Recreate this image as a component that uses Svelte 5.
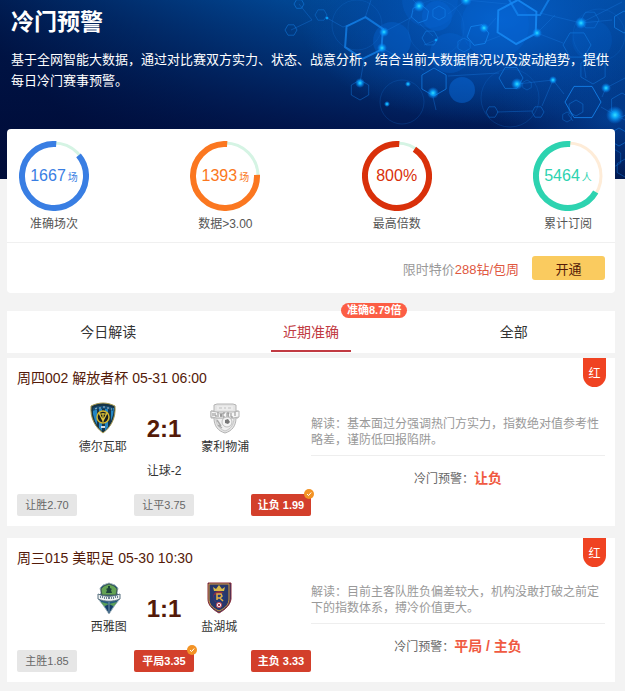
<script>
  let activeTab = 'recent';

  const stats = [
    { value: '1667', unit: '场', label: '准确场次', color: '#397ee3', track: '#d5f4e4', gap: 50 },
    { value: '1393', unit: '场', label: '数据>3.00', color: '#fb7720', track: '#d5f4e4', gap: 88 },
    { value: '800%', unit: '', label: '最高倍数', color: '#d9300a', track: '#d5f4e4', gap: 33 },
    { value: '5464', unit: '人', label: '累计订阅', color: '#2dd3b0', track: '#feecd8', gap: 120 }
  ];

  const tabs = [
    { id: 'today', label: '今日解读' },
    { id: 'recent', label: '近期准确', badge: '准确8.79倍' },
    { id: 'all', label: '全部' }
  ];

  const matches = [
    {
      title: '周四002 解放者杯 05-31 06:00',
      home: { name: '德尔瓦耶', crest: 'valle' },
      away: { name: '蒙利物浦', crest: 'liverpool' },
      score: '2:1',
      handicap: '让球-2',
      odds: [
        { text: '让胜2.70' },
        { text: '让平3.75' },
        { text: '让负 1.99', picked: true, hit: true }
      ],
      analysis: '基本面过分强调热门方实力，指数绝对值参考性略差，谨防低回报陷阱。',
      warning: '让负'
    },
    {
      title: '周三015 美职足 05-30 10:30',
      home: { name: '西雅图', crest: 'seattle' },
      away: { name: '盐湖城', crest: 'saltlake' },
      score: '1:1',
      odds: [
        { text: '主胜1.85' },
        { text: '平局3.35', picked: true, hit: true },
        { text: '主负 3.33', picked: true }
      ],
      analysis: '目前主客队胜负偏差较大，机构没敢打破之前定下的指数体系，搏冷价值更大。',
      warning: '平局 / 主负'
    }
  ];

  // [cx, cy, radius, rotation, opacity]
  const hexagons = [
    [364, 38, 21, 4, 0.7], [517, 22, 22, 2, 0.9], [420, 14, 9, 10, 0.6], [439, 13, 7, 0, 0.5],
    [430, 38, 8, 30, 0.45], [478, 35, 11, 20, 0.7], [464, 45, 7, 0, 0.4], [577, 45, 14, 30, 0.45],
    [434, 82, 14, 0, 0.65], [360, 90, 10, 0, 0.4], [511, 78, 12, 30, 0.55], [583, 102, 18, 30, 0.8],
    [576, 108, 8, 0, 0.4], [492, 112, 6, 30, 0.4], [538, 112, 6, 30, 0.4], [567, 117, 5, 0, 0.35],
    [624, 22, 11, 0, 0.6], [321, 15, 6, 30, 0.35], [299, 4, 5, 30, 0.5], [291, 30, 6, 30, 0.45],
    [593, 70, 14, 0, 0.4], [529, -4, 22, 30, 0.7], [527, 85, 5, 0, 0.3], [590, 20, 9, 30, 0.35],
    [619, 137, 9, 0, 0.5], [612, 158, 10, 0, 0.35], [625, 168, 9, 0, 0.4], [622, 105, 12, 0, 0.4]
  ];

  // [cx, cy, radius, opacity]
  const bubbles = [
    [392, 41, 19, 0.35], [437, 16, 15, 0.4], [450, 53, 20, 0.3], [462, 90, 13, 0.5],
    [495, 25, 34, 0.3], [517, 22, 20, 0.4], [592, 40, 20, 0.2], [430, 0, 28, 0.25]
  ];

  const circles = [
    [357, 25, 25], [402, 102, 22], [510, 98, 29], [599, 35, 26], [436, 28, 28]
  ];

  const links = [
    '291,30 312,20 299,4', '327,18 343,27 356,22', '365,18 371,0', '384,32 412,17',
    '382,48 396,56 424,70', '419,6 413,0', '436,40 424,45', '448,14 466,0 507,4',
    '487,28 496,18', '484,42 500,36', '537,33 563,43', '540,13 581,23 612,20',
    '581,23 622,2', '360,83 364,60', '433,97 436,110', '448,76 499,73', '517,84 553,80 564,94',
    '583,59 586,78', '553,80 542,106', '606,88 602,97', '601,107 615,115 625,120',
    '497,112 532,111', '568,114 573,121', '537,33 555,15', '420,24 433,36', '606,88 625,78'
  ];

  // [cx, cy, radius]
  const glows = [
    [384, 32, 5], [382, 48, 5], [419, 6, 6], [484, 28, 5], [537, 33, 5], [581, 23, 6],
    [360, 83, 5], [433, 93, 6], [517, 84, 6], [553, 80, 4], [606, 88, 5], [615, 115, 9],
    [466, 0, 6], [327, 18, 2], [436, 40, 2], [408, 84, 3], [387, 104, 3]
  ];

  function hexPoints([cx, cy, r, rotation]) {
    return [0, 1, 2, 3, 4, 5]
      .map((i) => {
        const a = ((i * 60 - 90 + rotation) * Math.PI) / 180;
        return `${(cx + r * Math.cos(a)).toFixed(1)},${(cy + r * Math.sin(a)).toFixed(1)}`;
      })
      .join(' ');
  }
</script>

<main>
  <header class="hero">
    <svg class="hero-art" viewBox="0 0 625 179" preserveAspectRatio="xMaxYMin slice" aria-hidden="true">
      <defs>
        <linearGradient id="sky" x1="0" y1="0" x2="0" y2="1">
          <stop offset="0" stop-color="#014c9c" />
          <stop offset="0.35" stop-color="#01377f" />
          <stop offset="0.7" stop-color="#011b57" />
          <stop offset="1" stop-color="#011040" />
        </linearGradient>
        <linearGradient id="shade" x1="0" y1="0.3" x2="1" y2="0">
          <stop offset="0" stop-color="#000c38" stop-opacity="0.85" />
          <stop offset="0.5" stop-color="#000c38" stop-opacity="0.1" />
          <stop offset="1" stop-color="#000c38" stop-opacity="0" />
        </linearGradient>
        <radialGradient id="light">
          <stop offset="0" stop-color="#0563d0" stop-opacity="0.9" />
          <stop offset="0.6" stop-color="#0350b4" stop-opacity="0.5" />
          <stop offset="1" stop-color="#0350ac" stop-opacity="0" />
        </radialGradient>
        <radialGradient id="glow">
          <stop offset="0" stop-color="#35e0ff" />
          <stop offset="0.35" stop-color="#08aaff" stop-opacity="0.9" />
          <stop offset="1" stop-color="#0780ff" stop-opacity="0" />
        </radialGradient>
      </defs>
      <rect width="625" height="179" fill="url(#sky)" />
      <rect width="625" height="179" fill="url(#shade)" />
      <ellipse cx="500" cy="20" rx="200" ry="105" fill="url(#light)" />
      <ellipse cx="610" cy="120" rx="120" ry="75" fill="url(#light)" opacity="0.5" />
      {#each bubbles as [cx, cy, r, opacity]}
        <circle {cx} {cy} {r} fill="#0767d8" {opacity} />
      {/each}
      {#each circles as [cx, cy, r]}
        <circle {cx} {cy} {r} fill="none" stroke="#1270d2" opacity="0.25" />
      {/each}
      {#each links as points}
        <polyline {points} fill="none" stroke="#1675dc" opacity="0.4" />
      {/each}
      {#each hexagons as hex}
        <polygon
          points={hexPoints(hex)}
          fill="none"
          stroke="#1687f2"
          stroke-width={hex[2] > 20 ? 2 : 1}
          opacity={hex[4]}
        />
      {/each}
      {#each glows as [cx, cy, r]}
        <circle {cx} {cy} {r} fill="url(#glow)" />
      {/each}
    </svg>
    <div class="hero-text">
      <h1>冷门预警</h1>
      <p>基于全网智能大数据，通过对比赛双方实力、状态、战意分析，结合当前大数据情况以及波动趋势，提供每日冷门赛事预警。</p>
    </div>
  </header>

  <section class="summary">
    <div class="stats">
      {#each stats as stat}
        <div class="stat">
          <div class="ring">
            <svg viewBox="0 0 70 70" aria-hidden="true">
              <circle cx="35" cy="35" r="33" fill="none" stroke={stat.track} stroke-width="3" />
              <circle
                cx="35"
                cy="35"
                r="32"
                fill="none"
                stroke={stat.color}
                stroke-width="6"
                pathLength="360"
                stroke-dasharray="{364 - stat.gap} 360"
                transform="rotate({stat.gap - 90} 35 35)"
              />
            </svg>
            <div class="ring-text" style="color: {stat.color}">
              <span>{stat.value}</span>
              {#if stat.unit}
                <small>{stat.unit}</small>
              {/if}
            </div>
          </div>
          <div class="stat-label">{stat.label}</div>
        </div>
      {/each}
    </div>
    <div class="offer">
      <span>限时特价<em>288钻/包周</em></span>
      <button class="open-btn" type="button">开通</button>
    </div>
  </section>

  <nav class="tabs">
    {#each tabs as tab}
      <button
        class="tab {activeTab === tab.id ? 'active' : ''}"
        type="button"
        on:click={() => (activeTab = tab.id)}
      >
        <span class="tab-label">
          {tab.label}
          {#if tab.badge}
            <span class="badge">{tab.badge}</span>
          {/if}
        </span>
      </button>
    {/each}
  </nav>

  {#snippet crest(kind)}
    <svg class="crest" viewBox="0 0 32 32" aria-hidden="true">
      {#if kind === 'valle'}
        <path d="M16 1c4 0 8 1 12 3 1 12-4 21-12 27C8 25 3 16 4 4c4-2 8-3 12-3z" fill="#173445" stroke="#a99b52" />
        <path d="M6 7h4v16l-2-4-2-7zM12 5h3v24l-3-3zM18 5h3v20l-3 4zM24 6h3l-1 7-2 6z" fill="#2386c4" />
        <path d="M6 6c6-3 14-3 20 0v3c-6-3-14-3-20 0z" fill="#164f78" />
        <path d="M8 7l2-1m2 0h2m2-1h2m2 1h2m2 1h1" stroke="#a9c4cf" />
        <circle cx="16" cy="15" r="6" fill="#151e20" stroke="#d2b52d" stroke-width="1.5" />
        <path d="M12 11l4 8 4-8M16 11v9M13 12h6" fill="none" stroke="#e4ca3d" stroke-width="1.2" />
        <path d="M14 25h4" stroke="#d8dde0" stroke-width="2" />
      {:else if kind === 'liverpool'}
        <path d="M5 3l3-1h16l3 1v6h2v7h-2c0 8-4 13-11 15C9 29 5 24 5 16H2V9h3z" fill="#e4e4e4" stroke="#b4b4b4" />
        <path d="M7 16c0 6 3 11 9 13 6-2 9-7 9-13z" fill="#f0f0f0" stroke="#c6c6c6" />
        <path d="M8 4h16v4H8z" fill="#ececec" />
        <path d="M10 6h3m2 0h2m2 0h3" stroke="#c0c0c0" />
        <path d="M2 9l6 1h16l6-1v6l-6 1H8l-6-1z" fill="#f6f6f6" stroke="#b4b4b4" />
        <path d="M4 11v3m2-3v3h2m1-4v5m2-4l1 4 1-4m3 0h-2v4h2m2-4v4m0-4h2l-1 2 1 2m2-4v4h2m2-5v4" fill="none" stroke="#8f8f8f" />
        <circle cx="18" cy="20" r="5" fill="#f4f4f4" stroke="#bdbdbd" />
        <path d="M16 18l3-1 2 3-2 2-3-1z" fill="#777" />
        <path d="M8 18l4 6m-3-1l4 3" stroke="#aaa" stroke-width="1.5" />
      {:else if kind === 'seattle'}
        <path d="M16 1l6 2 3 3-1 5 2 2v5l-4 5-6 9-6-9-4-5v-5l2-2-1-5 3-3z" fill="#235a80" stroke="#a1b2b9" />
        <path d="M16 2l5 2 3 3-1 6H9L8 7l3-3z" fill="#63a454" stroke="#425d4f" />
        <path d="M15 4h2v2l2 1-1 1 1 3h-6l1-3-1-1 2-1z" fill="#1c4439" />
        <path d="M5 12c7 3 15 3 22 0v5c-7 3-15 3-22 0z" fill="#eef2f1" stroke="#587080" />
        <path d="M7 15h1m1 0h1m1 1h1m1 0h1m1 0h2m1 0h1m1 0h1m1-1h1m1 0h1" stroke="#6b8292" stroke-width="2" />
        <path d="M8 20l8 2 8-2-3 4H11z" fill="#5a9f59" />
        <path d="M12 24l4-2 4 2-4 7z" fill="#173e68" />
        <path d="M16 20v10" stroke="#7698af" />
      {:else}
        <path d="M5 1h23v16c-1 6-5 10-12 14C9 27 5 23 5 17z" fill="#27376b" stroke="#8a2936" />
        <path d="M6 2h20v15c0 5-3 9-10 12C9 26 6 22 6 17z" fill="none" stroke="#d99b3c" />
        <path d="M11 9l-1-4 3 2 3-4 3 4 3-2-1 4z" fill="#d9bb48" />
        <circle cx="16" cy="15" r="6" fill="#872f49" />
        <path d="M11 13l-1 4 4 4 7-1 2-5-2-4z" fill="#223a78" />
        <path d="M14 18v-6h4l1 2-2 2h-3m3 0l3 3" fill="none" stroke="#e5b144" stroke-width="1.5" />
        <circle cx="16" cy="23" r="2.6" fill="#f3f1ef" stroke="#be4556" />
        <path d="M15 22h2v2h-2z" fill="#9b3f57" />
      {/if}
    </svg>
  {/snippet}

  {#each matches as match}
    <article class="match">
      <span class="ribbon">红</span>
      <h2>{match.title}</h2>
      <div class="match-body">
        <div class="result">
          <div class="teams">
            <div class="team">
              {@render crest(match.home.crest)}
              <span>{match.home.name}</span>
            </div>
            <strong class="score">{match.score}</strong>
            <div class="team">
              {@render crest(match.away.crest)}
              <span>{match.away.name}</span>
            </div>
          </div>
          {#if match.handicap}
            <div class="handicap">{match.handicap}</div>
          {/if}
          <ul class="odds">
            {#each match.odds as odd}
              <li class="odd {odd.picked ? 'picked' : ''}">
                {odd.text}
                {#if odd.hit}
                  <svg class="hit" viewBox="0 0 10 10" aria-hidden="true">
                    <circle cx="5" cy="5" r="5" fill="#f39325" />
                    <path d="M3 5l1.5 1.6L7.2 3.5" fill="none" stroke="#fff" />
                  </svg>
                {/if}
              </li>
            {/each}
          </ul>
        </div>
        <div class="insight">
          <p class="analysis">解读：{match.analysis}</p>
          <p class="warning">冷门预警：<b>{match.warning}</b></p>
        </div>
      </div>
    </article>
  {/each}
</main>

<style>
  :global(body) {
    background: #f3f3f3;
  }

  main {
    font-family: "Liberation Sans", "Noto Sans CJK SC", sans-serif;
    font-size: 12px;
    color: #333;
    padding-bottom: 9px;
  }

  h1,
  h2,
  p,
  ul {
    margin: 0;
    padding: 0;
  }

  button {
    font-family: inherit;
    border: 0;
    padding: 0;
    cursor: pointer;
  }

  .hero {
    position: relative;
    padding: 10px 11px 88px;
    background: #010e3b;
    color: #fff;
    overflow: hidden;
  }

  .hero-art {
    position: absolute;
    inset: 0;
    width: 100%;
    height: 100%;
  }

  .hero-text {
    position: relative;
  }

  h1 {
    font-size: 23px;
    line-height: 24px;
    margin-bottom: 15px;
  }

  .hero p {
    font-size: 13px;
    line-height: 21px;
  }

  .summary {
    position: relative;
    margin: -50px 10px 18px 7px;
    background: #fff;
    border-radius: 4px;
  }

  .stats {
    display: flex;
    justify-content: space-between;
    padding: 12px 12px 8px;
    border-bottom: 1px solid #f0f0f0;
  }

  .stat {
    width: 70px;
    text-align: center;
  }

  .ring {
    position: relative;
    height: 70px;
  }

  .ring svg {
    display: block;
    width: 70px;
    height: 70px;
  }

  .ring-text {
    position: absolute;
    inset: 0;
    display: flex;
    align-items: center;
    justify-content: center;
    gap: 2px;
    font-size: 16px;
  }

  .ring-text small {
    font-size: 10px;
  }

  .stat-label {
    margin-top: 4px;
    line-height: 19px;
    color: #555;
    white-space: nowrap;
  }

  .offer {
    display: flex;
    align-items: center;
    justify-content: flex-end;
    gap: 13px;
    padding: 13px 10px;
    font-size: 13px;
    color: #999;
  }

  .offer em {
    font-style: normal;
    color: #e0583f;
  }

  .open-btn {
    width: 73px;
    height: 24px;
    border-radius: 3px;
    background: #facb5f;
    color: #541a08;
    font-size: 13px;
  }

  .tabs {
    display: grid;
    grid-template-columns: repeat(3, 1fr);
    margin: 0 10px 5px 7px;
    background: #fff;
  }

  .tab {
    display: flex;
    justify-content: center;
    background: none;
    font-size: 14px;
    line-height: 36px;
    padding-bottom: 1px;
    color: #333;
  }

  .tab-label {
    position: relative;
    padding: 3px 12px 0;
    border-bottom: 2px solid transparent;
  }

  .tab.active {
    color: #c13a42;
  }

  .tab.active .tab-label {
    border-color: #c13a42;
  }

  .badge {
    position: absolute;
    top: -8px;
    left: 70px;
    padding: 0 6px;
    border-radius: 8px;
    background: #fc5e45;
    color: #fff;
    font-size: 11px;
    font-weight: bold;
    line-height: 15px;
    white-space: nowrap;
  }

  .match {
    position: relative;
    margin: 0 10px 12px 7px;
    padding: 10px;
    background: #fff;
  }

  .match:last-child {
    margin-bottom: 0;
  }

  .ribbon {
    position: absolute;
    top: 0;
    right: 9px;
    width: 23px;
    height: 29px;
    border-radius: 0 0 12px 12px;
    background: #f04322;
    color: #fff;
    line-height: 33px;
    text-align: center;
  }

  h2 {
    font-size: 14px;
    font-weight: normal;
    line-height: 20px;
    color: #541a08;
  }

  .match-body {
    display: grid;
    grid-template-columns: 1fr 1fr;
  }

  .teams {
    display: flex;
    align-items: center;
    justify-content: center;
    gap: 20px;
    margin-top: 14px;
  }

  .team {
    display: flex;
    flex-direction: column;
    align-items: center;
    gap: 4px;
    line-height: 18px;
  }

  .crest {
    width: 32px;
    height: 32px;
  }

  .score {
    font-size: 24px;
    line-height: 28px;
    color: #541a08;
  }

  .handicap {
    margin-top: 6px;
    line-height: 18px;
    text-align: center;
  }

  .odds {
    display: flex;
    justify-content: space-between;
    margin-top: 14px;
    list-style: none;
  }

  .odd {
    position: relative;
    width: 60px;
    border-radius: 2px;
    background: #e6e6e6;
    color: #666;
    font-size: 11px;
    line-height: 22px;
    text-align: center;
    white-space: nowrap;
  }

  .odd.picked {
    background: #d33f2b;
    color: #fff;
    font-weight: bold;
  }

  .hit {
    position: absolute;
    top: -5px;
    right: -3px;
    width: 10px;
    height: 10px;
  }

  .insight {
    align-self: center;
  }

  .analysis {
    padding-bottom: 7px;
    border-bottom: 1px solid #eee;
    line-height: 16px;
    color: #999;
  }

  .warning {
    margin-top: 12px;
    line-height: 20px;
    text-align: center;
    color: #666;
  }

  .warning b {
    font-size: 14px;
    color: #f05a42;
  }
</style>
